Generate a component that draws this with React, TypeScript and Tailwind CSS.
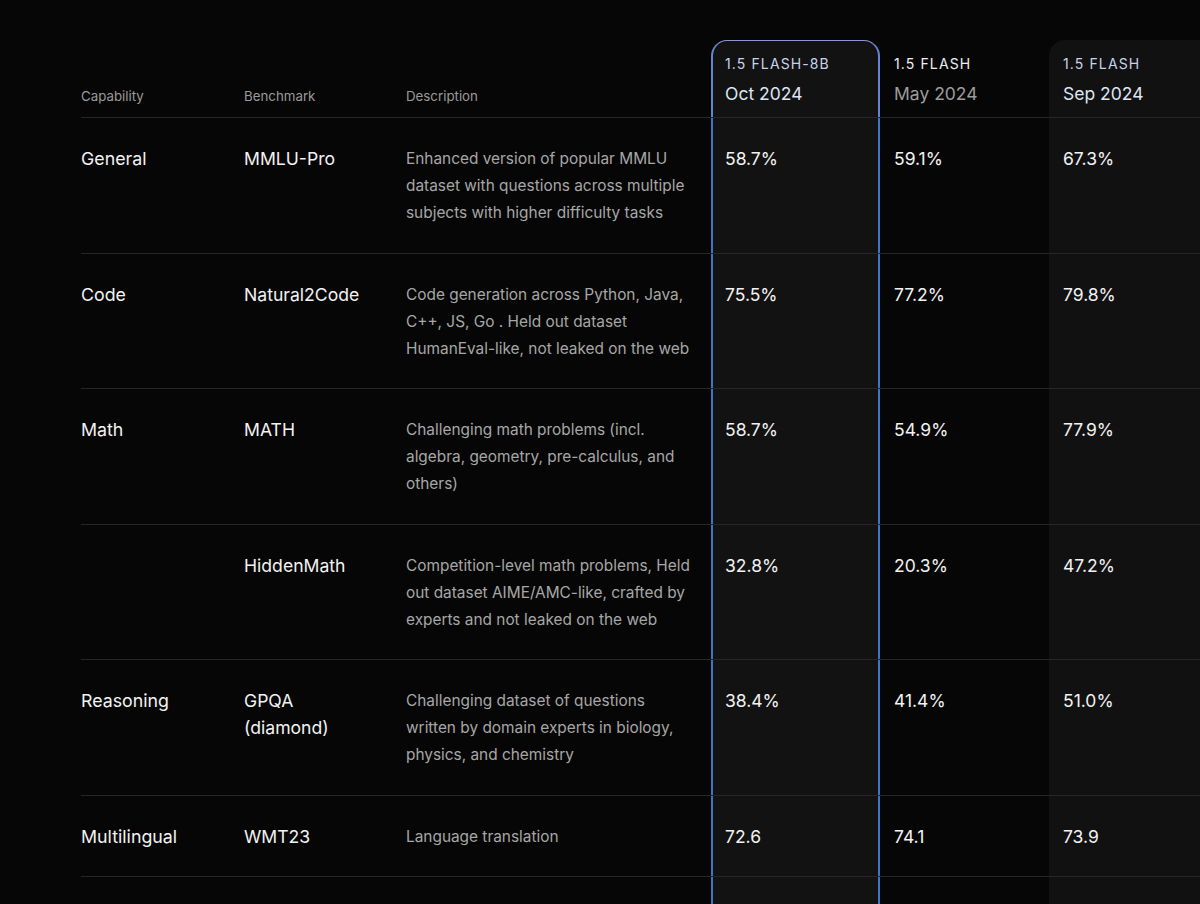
import React from 'react';

type Row = {
  cap: string;
  bench: string[];
  desc: string[];
  values: [string, string, string];
};

const ROWS: Row[] = [
  {
    cap: 'General',
    bench: ['MMLU-Pro'],
    desc: ['Enhanced version of popular MMLU', 'dataset with questions across multiple', 'subjects with higher difficulty tasks'],
    values: ['58.7%', '59.1%', '67.3%'],
  },
  {
    cap: 'Code',
    bench: ['Natural2Code'],
    desc: ['Code generation across Python, Java,', 'C++, JS, Go . Held out dataset', 'HumanEval-like, not leaked on the web'],
    values: ['75.5%', '77.2%', '79.8%'],
  },
  {
    cap: 'Math',
    bench: ['MATH'],
    desc: ['Challenging math problems (incl.', 'algebra, geometry, pre-calculus, and', 'others)'],
    values: ['58.7%', '54.9%', '77.9%'],
  },
  {
    cap: '',
    bench: ['HiddenMath'],
    desc: ['Competition-level math problems, Held', 'out dataset AIME/AMC-like, crafted by', 'experts and not leaked on the web'],
    values: ['32.8%', '20.3%', '47.2%'],
  },
  {
    cap: 'Reasoning',
    bench: ['GPQA', '(diamond)'],
    desc: ['Challenging dataset of questions', 'written by domain experts in biology,', 'physics, and chemistry'],
    values: ['38.4%', '41.4%', '51.0%'],
  },
  {
    cap: 'Multilingual',
    bench: ['WMT23'],
    desc: ['Language translation'],
    values: ['72.6', '74.1', '73.9'],
  },
  {
    cap: 'Long Context',
    bench: ['MRCR (1M)'],
    desc: ['Novel, diagnostic long-context', 'understanding evaluation'],
    values: ['54.7%', '71.9%', '82.6%'],
  },
];

const GRID = 'grid grid-cols-[163px_162px_305px_169px_169px_169px]';

function Lines({ lines }: { lines: string[] }) {
  return (
    <>
      {lines.map((l, i) => (
        <div key={i} className="whitespace-nowrap">
          {l}
        </div>
      ))}
    </>
  );
}

export default function App() {
  return (
    <div
      className="w-[1200px] h-[904px] overflow-hidden bg-[#060606] pt-[40px] pl-[81px]"
      style={{ fontFamily: 'Inter, Roboto, sans-serif' }}
    >
      {/* header */}
      <div className={`${GRID} h-[77px]`}>
        <div className="flex items-end pb-[10px] text-[13.3px] text-[#9a9a9a]">Capability</div>
        <div className="flex items-end pb-[10px] text-[13.3px] text-[#9a9a9a]">Benchmark</div>
        <div className="flex items-end pb-[10px] text-[13.3px] text-[#9a9a9a]">Description</div>
        <div className="rounded-t-[16px] border-solid border-t-[1.5px] border-l-2 border-r-2 border-t-[#8f94d4] border-l-[#6585d0] border-r-[#6585d0] bg-[#121212] pl-[12px] pt-[13px]">
          <div className="text-[14px] leading-[20px] tracking-[0.08em] text-[#c9d2ec]">1.5 FLASH-8B</div>
          <div className="mt-[8px] text-[17.5px] leading-[24px] text-[#dfe5f2]">Oct 2024</div>
        </div>
        <div className="pl-[14px] pt-[14px]">
          <div className="text-[14px] leading-[20px] tracking-[0.08em] text-[#eeeeee]">1.5 FLASH</div>
          <div className="mt-[8px] text-[17.5px] leading-[24px] text-[#9c9c9c]">May 2024</div>
        </div>
        <div className="rounded-tl-[16px] bg-[#111111] pl-[14px] pt-[14px]">
          <div className="text-[14px] leading-[20px] tracking-[0.08em] text-[#c9d2ec]">1.5 FLASH</div>
          <div className="mt-[8px] text-[17.5px] leading-[24px] text-[#dfe5f2]">Sep 2024</div>
        </div>
      </div>

      {/* rows */}
      {ROWS.map((r, i) => (
        <div key={i} className={`${GRID} border-t border-[#262626]`}>
          <div className="pt-[27px] pb-[26.5px] text-[17.8px] leading-[27px] text-[#f2f2f2]">{r.cap}</div>
          <div className="pt-[27px] pb-[26.5px] text-[17.6px] leading-[27px] text-[#f2f2f2]">
            <Lines lines={r.bench} />
          </div>
          <div className="pt-[27px] pb-[26.5px] text-[15.4px] leading-[27px] text-[#a6a6a6]">
            <Lines lines={r.desc} />
          </div>
          <div className="border-solid border-l-2 border-r-2 border-l-[#4274c6] border-r-[#4274c6] bg-[#121212] pt-[27px] pb-[26.5px] pl-[12px] text-[17.5px] leading-[27px] text-[#f2f2f2]">
            {r.values[0]}
          </div>
          <div className="pt-[27px] pb-[26.5px] pl-[14px] text-[17.5px] leading-[27px] text-[#f2f2f2]">{r.values[1]}</div>
          <div className="bg-[#111111] pt-[27px] pb-[26.5px] pl-[14px] text-[17.5px] leading-[27px] text-[#f2f2f2]">
            {r.values[2]}
          </div>
        </div>
      ))}
    </div>
  );
}
